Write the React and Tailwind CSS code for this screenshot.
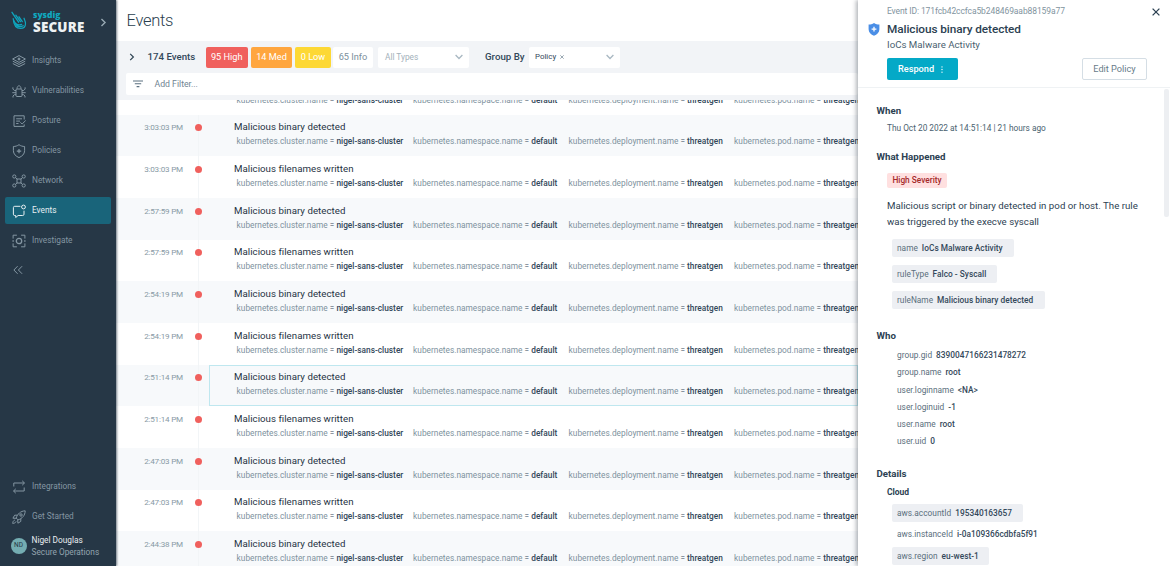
import React from "react";

const navItems = [
  { id: "insights", label: "Insights" },
  { id: "vulnerabilities", label: "Vulnerabilities" },
  { id: "posture", label: "Posture" },
  { id: "policies", label: "Policies" },
  { id: "network", label: "Network" },
  { id: "events", label: "Events", active: true },
  { id: "investigate", label: "Investigate" },
];

const bottomItems = [
  { id: "integrations", label: "Integrations" },
  { id: "rocket", label: "Get Started" },
];

const BINARY = "Malicious binary detected";
const FILENAMES = "Malicious filenames written";

const events = [
  { time: "3:03:03 PM", title: BINARY },
  { time: "3:03:03 PM", title: FILENAMES },
  { time: "2:57:59 PM", title: BINARY },
  { time: "2:57:59 PM", title: FILENAMES },
  { time: "2:54:19 PM", title: BINARY },
  { time: "2:54:19 PM", title: FILENAMES },
  { time: "2:51:14 PM", title: BINARY, selected: true },
  { time: "2:51:14 PM", title: FILENAMES },
  { time: "2:47:03 PM", title: BINARY },
  { time: "2:47:03 PM", title: FILENAMES },
  { time: "2:44:38 PM", title: BINARY },
];

const labels = [
  { name: "kubernetes.cluster.name", value: "nigel-sans-cluster", width: "w-[176.5px]" },
  { name: "kubernetes.namespace.name", value: "default", width: "w-[155.5px]" },
  { name: "kubernetes.deployment.name", value: "threatgen", width: "w-[165.5px]" },
  { name: "kubernetes.pod.name", value: "threatgen", width: "w-[140px]" },
];

const ruleTags = [
  { name: "name", value: "IoCs Malware Activity", width: "w-[122px]" },
  { name: "ruleType", value: "Falco - Syscall", width: "w-[105px]" },
  { name: "ruleName", value: "Malicious binary detected", width: "w-[153px]" },
];

const who = [
  { name: "group.gid", value: "8390047166231478272" },
  { name: "group.name", value: "root" },
  { name: "user.loginname", value: "<NA>" },
  { name: "user.loginuid", value: "-1" },
  { name: "user.name", value: "root" },
  { name: "user.uid", value: "0" },
];

const cloud = [
  { name: "aws.accountId", value: "195340163657", style: "w-[131px] bg-[#edeff3]" },
  { name: "aws.instanceId", value: "i-0a109366cdbfa5f91", style: "w-[170px]" },
  { name: "aws.region", value: "eu-west-1", style: "w-[97px] bg-[#edeff3]" },
];

const icons = {
  insights: (
    <>
      <path d="M7 1.6 13.4 5 7 8.4.6 5Z" />
      <path d="m.8 7.2 6.2 3.2 6.2-3.2M.8 9.5 7 12.7l6.2-3.2" />
      <circle cx="7" cy="5" r="1" fill="currentColor" />
    </>
  ),
  vulnerabilities: (
    <>
      <rect x="4" y="5" width="6" height="7.5" rx="1" />
      <path d="M5 4.8C5 .8 9 .8 9 4.8M4 6.5H2.3L.9 5V3.3M10 6.5h1.7L13.1 5V3.3M4 8.7H.3M10 8.7h3.7M4 10.7H2.3L1 12v1.5M10 10.7h1.7L13 12v1.5" />
    </>
  ),
  posture: (
    <>
      <path d="M12.2 5.5V1.8H2v10.6h10.2v-2" />
      <path d="M4.2 4.8H10M4.2 7.1H8M4.2 9.5h2.3M8.4 8.3l1.7 1.7 3.6-3.5" />
    </>
  ),
  policies: (
    <>
      <path d="M7 .7c1.8 1.3 3.6 1.7 5.6 1.8v4.2c0 3.4-2.5 5.6-5.6 6.9-3.1-1.3-5.6-3.5-5.6-6.9V2.5C3.4 2.4 5.2 2 7 .7Z" />
      <path d="M7 4.9v4.4M4.8 7.1h4.4" strokeWidth="1.2" />
    </>
  ),
  network: (
    <>
      <rect x="5" y="5" width="4" height="4" />
      <circle cx="2.3" cy="2.5" r="1.6" />
      <circle cx="11.7" cy="2.5" r="1.6" />
      <circle cx="2.3" cy="11.5" r="1.6" />
      <circle cx="11.7" cy="11.5" r="1.6" />
      <path d="M3.5 3.6 5.2 5.2M10.5 3.6 8.8 5.2M3.5 10.4l1.7-1.6M10.5 10.4 8.8 8.8" />
    </>
  ),
  events: (
    <>
      <path d="M8.4 2.3H2.7q-1.3 0-1.3 1.3v6.6q0 1.3 1.3 1.3h1v2l2.4-2h4.6q1.3 0 1.3-1.3V6.7" />
      <circle cx="11.5" cy="3" r="1.9" />
    </>
  ),
  investigate: (
    <>
      <path d="M1.1 4.6V1.2h3.8M9.1 1.2h3.8v3.4M12.9 9.4v3.4H9.1M4.9 12.8H1.1V9.4M1.1 6v2M12.9 6v2" />
      <circle cx="7" cy="7" r="2.7" strokeWidth="1.3" />
    </>
  ),
  integrations: <path d="M1.8 6.5V3h10.5M10.2.8l2.3 2.2-2.3 2.2M12.2 7.5V11H1.7M3.8 8.8 1.5 11l2.3 2.2" />,
  rocket: (
    <>
      <path d="M4.2 8C5.5 4 8.5 1 13.2.8c-.1 4.7-3 7.8-7.2 9.1Z" />
      <path d="M5.3 5.2H2.7L.9 8.2l3.2.1M8.8 8.9v2.5l-2.9 1.8-.2-3.2M2.8 10C1.4 10.6.8 11.7.7 13.4c1.7-.1 2.9-.7 3.5-2" />
      <circle cx="9" cy="5" r="1.2" />
    </>
  ),
};

function NavIcon({ id }) {
  return (
    <svg viewBox="0 0 14 14" className="-ml-[1px] size-[14px] shrink-0 overflow-visible" fill="none" stroke="currentColor" strokeWidth="1">
      {icons[id]}
    </svg>
  );
}

function NavItem({ id, label, active }) {
  return (
    <div
      className={`flex h-[27px] items-center gap-[6.5px] rounded-[2px] pl-[7.5px] ${
        active ? "bg-[#19647a] text-[#e6eff2]" : "text-[#8496a2]"
      }`}
    >
      <NavIcon id={id} />
      <span className="text-[8.3px]">{label}</span>
    </div>
  );
}

function Chevron({ className }) {
  return (
    <svg viewBox="0 0 8 8" className={className} fill="none" stroke="currentColor" strokeWidth="1.2">
      <path d="m2.2.8 3.2 3.2-3.2 3.2" />
    </svg>
  );
}

function Sidebar() {
  return (
    <aside className="z-10 flex w-[116px] shrink-0 flex-col bg-[#263746] px-[5px] shadow-[1px_0_2px_rgba(30,45,60,0.6)]">
      <div className="flex h-[46px] items-center pl-[6px]">
        <svg viewBox="0 0 16 20" className="-mt-[4px] h-5 w-4 shrink-0" fill="none" stroke="#0fa5bd" strokeLinecap="round">
          <path d="M1 1.3 7.6 11.2" strokeWidth="1.3" />
          <path d="M2.2 7.6C2.6 13 5 17.4 9.5 17.4c3.2 0 5-2.3 5-5 0-2-.9-3.4-1.5-5.2" strokeWidth="1.2" />
          <path d="M4.8 4.2 9.4 10.6M8 5.8l3.3 4.8M2.6 9.2c1.8 3.8 4.6 5.6 8 4.2M3.8 11.8c2 3.4 5 4.8 8.4 3" strokeWidth="1.3" />
        </svg>
        <div className="-mt-[2px] ml-[6px] w-[54px] font-['Open_Sans']">
          <div className="text-[8.5px] leading-[9px] font-extrabold text-[#10a7bf]">sysdig</div>
          <div className="mt-[2px] text-[13.4px] leading-[13px] font-extrabold tracking-[0.2px] text-[#eef2f4]">SECURE</div>
        </div>
        <Chevron className="-mt-[2px] ml-[12px] size-[9px] text-[#9aabb5]" />
      </div>
      <nav className="flex flex-col gap-[3px] pt-[1px]">
        {navItems.map((item) => (
          <NavItem key={item.id} {...item} />
        ))}
      </nav>
      <svg viewBox="0 0 10 10" className="mt-[11px] ml-[8px] size-[10px] text-[#8698a4]" fill="none" stroke="currentColor">
        <path d="M4.6 1.2.9 5l3.7 3.8M9.1 1.2 5.4 5l3.7 3.8" />
      </svg>
      <nav className="mt-auto flex flex-col gap-[3px]">
        {bottomItems.map((item) => (
          <NavItem key={item.id} {...item} />
        ))}
      </nav>
      <div className="mb-[5px] flex h-[31px] items-center gap-[5px] pl-[5.5px]">
        <span className="flex size-[16px] shrink-0 items-center justify-center rounded-full bg-[#74adb2] text-[6.5px] text-[#263746]">
          ND
        </span>
        <div className="text-[8.3px] leading-[12px] whitespace-nowrap">
          <div className="text-[#e8edf0]">Nigel Douglas</div>
          <div className="text-[#93a4ae]">Secure Operations</div>
        </div>
      </div>
    </aside>
  );
}

function DropArrow() {
  return (
    <svg viewBox="0 0 8 6" className="ml-auto h-[6px] w-[8px] text-[#a9b8c2]" fill="none" stroke="currentColor" strokeWidth="1.3">
      <path d="m.6 1 3.4 3.5L7.4 1" />
    </svg>
  );
}

function Toolbar() {
  return (
    <div className="h-[59px] shrink-0 bg-[#f2f4f7] pt-[6px] pl-[10px]">
      <div className="flex h-[20.5px] items-center text-[9.2px]">
        <Chevron className="ml-[2px] size-[8px] text-[#2f4454]" />
        <span className="ml-[11.5px] w-[58px] text-[9.7px] font-medium whitespace-nowrap text-[#33485a]">174 Events</span>
        <span className="flex h-full w-[42.5px] items-center justify-center rounded-[2px] bg-[#f0605d] text-white">95 High</span>
        <span className="ml-[3px] flex h-full w-[41px] items-center justify-center rounded-[2px] bg-[#ffa63f] text-white">14 Med</span>
        <span className="ml-[3px] flex h-full w-[36px] items-center justify-center rounded-[2px] bg-[#fdd835] text-white">0 Low</span>
        <span className="ml-[2px] flex h-full w-[40px] items-center justify-center rounded-[2px] bg-white text-[#7c8f9c]">65 Info</span>
        <div className="ml-[5px] flex h-full w-[91px] items-center rounded-[2px] bg-white pr-[6px] pl-[7px]">
          <span className="text-[8.3px] text-[#a3b1bb]">All Types</span>
          <DropArrow />
        </div>
        <span className="ml-[16px] w-[44px] text-[9.7px] font-medium whitespace-nowrap text-[#33485a]">Group By</span>
        <div className="flex h-full w-[91px] items-center rounded-[2px] bg-white pr-[6px] pl-[6px]">
          <span className="text-[7.9px] text-[#33485a]">Policy</span>
          <svg viewBox="0 0 4 4" className="ml-[4px] size-[4px] text-[#8193a0]" fill="none" stroke="currentColor" strokeWidth="0.8">
            <path d="m.3.3 3.4 3.4M3.7.3.3 3.7" />
          </svg>
          <DropArrow />
        </div>
      </div>
      <div className="mt-[5px] flex h-[22.5px] items-center rounded-[2px] bg-white pl-[7px]">
        <svg viewBox="0 0 10 8" className="h-[8px] w-[10px] text-[#5b7080]" fill="none" stroke="currentColor" strokeWidth="1.1">
          <path d="M0 1h10M1.8 3.8h6.4M3.6 6.6h2.8" />
        </svg>
        <span className="ml-[11.5px] text-[8.7px] leading-[10px] text-[#6f8492]">Add Filter...</span>
      </div>
    </div>
  );
}

function EventLabels() {
  return (
    <div className="flex text-[8.3px] leading-[14px] whitespace-nowrap text-[#7e929e]">
      {labels.map(({ name, value, width }) => (
        <div key={name} className={`shrink-0 tracking-[0.01px] ${width}`}>
          {name} <span className="text-[#33485a]">=</span> <span className="font-medium text-[#33485a]">{value}</span>
        </div>
      ))}
    </div>
  );
}

function EventRow({ time, title, selected, striped }) {
  return (
    <div className={`flex h-[41.67px] shrink-0 ${striped ? "bg-[#f7f9fb]" : "bg-white"}`}>
      <div className="w-[67px] shrink-0 pt-[6.5px] text-right text-[8.1px] leading-[12px] tracking-[-0.2px] text-[#8799a5]">{time}</div>
      <div className="flex w-[26px] shrink-0 justify-center bg-[linear-gradient(#f2f5f7,#f2f5f7)] bg-[length:1px_100%] bg-[position:15px_0] bg-no-repeat pt-[9.5px] pl-[4.5px]">
        <span className="size-[7px] rounded-full bg-[#f0605d]" />
      </div>
      <div className={`min-w-0 flex-1 border pl-[24px] ${selected ? "border-[#bfe7ef]" : "border-transparent"}`}>
        <div className="pt-[4.7px] text-[9.7px] leading-[14px] tracking-[0.03px] text-[#1f3344]">{title}</div>
        <div className="pl-[2.6px]">
          <EventLabels />
        </div>
      </div>
    </div>
  );
}

function Main() {
  return (
    <main className="flex w-[742px] shrink-0 flex-col overflow-hidden bg-white">
      <h1 className="h-[41px] shrink-0 pl-[10.5px] text-[16.5px] leading-[42px] font-light tracking-[-0.3px] text-[#2a3e4e]">Events</h1>
      <Toolbar />
      <div className="flex min-h-0 flex-1 flex-col overflow-hidden">
        <div className="h-[14.8px] shrink-0 overflow-hidden pl-[120.6px]">
          <div className="-mt-[7px]">
            <EventLabels />
          </div>
        </div>
        {events.map((event, i) => (
          <EventRow key={i} {...event} striped={i % 2 === 0} />
        ))}
      </div>
    </main>
  );
}

function Tag({ name, value, style }) {
  return (
    <div className={`flex h-[18px] items-center gap-[4px] rounded-[2px] pl-[5px] text-[8.3px] tracking-[0.02px] whitespace-nowrap ${style}`}>
      <span className="text-[#5a6e7c]">{name}</span>
      <span className="font-medium text-[#33485a]">{value}</span>
    </div>
  );
}

function SectionTitle({ children }) {
  return <h3 className="h-[14px] text-[9.7px] leading-[14px] font-bold text-[#2c4152]">{children}</h3>;
}

function DetailPanel() {
  return (
    <aside className="z-10 flex w-[312px] shrink-0 flex-col overflow-hidden bg-white shadow-[-2px_0_4px_rgba(40,50,60,0.35)]">
      <header className="flex h-[88px] shrink-0 border-b border-[#eff2f4] pr-[10px] pl-[10px]">
        <svg viewBox="0 0 12 13" className="mt-[23px] h-[13px] w-[12px]">
          <path d="M6 0c1.7 1.1 3.4 1.5 5.4 1.6v4.7c0 3.2-2.3 5.3-5.4 6.5C2.9 11.6.6 9.5.6 6.3V1.6C2.6 1.5 4.3 1.1 6 0Z" fill="#4a8ee6" />
          <path d="M6 3.8v4.8M3.6 6.2h4.8" stroke="white" strokeWidth="1.3" />
        </svg>
        <div className="ml-[7px] flex-1">
          <div className="mt-[5px] text-[8.5px] leading-[13px] tracking-[-0.1px] text-[#8294a0]">Event ID: 171fcb42ccfca5b248469aab88159a77</div>
          <h2 className="mt-[3px] text-[11.8px] leading-[16px] font-medium tracking-[-0.08px] text-[#2c4152]">{BINARY}</h2>
          <div className="mt-[1px] text-[9.7px] leading-[14px] text-[#4a5f6f]">IoCs Malware Activity</div>
          <div className="mt-[6px] flex h-[22px] justify-between">
            <button className="flex w-[71px] items-center rounded-[2px] bg-[#04a9c7] pl-[11px] text-[9.2px] font-medium text-white">
              Respond
              <svg viewBox="0 0 2 8" className="ml-[7px] h-[7px] w-[2px]" fill="currentColor">
                <circle cx="1" cy="1" r=".8" />
                <circle cx="1" cy="4" r=".8" />
                <circle cx="1" cy="7" r=".8" />
              </svg>
            </button>
            <button className="mr-[13px] w-[65px] rounded-[2px] border border-[#d5dee5] text-[9.2px] text-[#677b89]">Edit Policy</button>
          </div>
        </div>
        <svg viewBox="0 0 8 8" className="absolute top-[8px] right-[10px] size-[8px] text-[#2c4152]" fill="none" stroke="currentColor" strokeWidth="1.3">
          <path d="m.6.6 6.8 6.8M7.4.6.6 7.4" />
        </svg>
      </header>
      <div className="flex min-h-0 flex-1">
        <div className="min-w-0 flex-1 overflow-hidden pt-[16px] pl-[18.5px]">
          <SectionTitle>When</SectionTitle>
          <div className="mt-[2.5px] pl-[10.5px] text-[8.3px] leading-[14px] text-[#4a5f6f]">
            Thu Oct 20 2022 at 14:51:14 | 21 hours ago
          </div>
          <div className="mt-[15.5px]">
            <SectionTitle>What Happened</SectionTitle>
          </div>
          <div className="mt-[9px] ml-[10.5px] flex h-[15px] w-[60px] items-center justify-center rounded-[2px] bg-[#ffe0e0] text-[8.3px] font-medium text-[#a52a2a]">
            High Severity
          </div>
          <p className="mt-[10px] ml-[10.5px] text-[9.7px] leading-[16px] tracking-[0.02px] whitespace-nowrap text-[#2c4152]">
            Malicious script or binary detected in pod or host. The rule
            <br />
            was triggered by the execve syscall
          </p>
          <div className="mt-[9px] ml-[15.5px] flex flex-col gap-[8px]">
            {ruleTags.map(({ width, ...tag }) => (
              <Tag key={tag.name} {...tag} style={`${width} bg-[#edeff3]`} />
            ))}
          </div>
          <div className="mt-[20px]">
            <SectionTitle>Who</SectionTitle>
          </div>
          <div className="mt-[3.5px] ml-[15.5px]">
            {who.map((item) => (
              <div key={item.name} className="flex h-[17.3px] items-center">
                <Tag {...item} style="w-full" />
              </div>
            ))}
          </div>
          <div className="mt-[16.5px]">
            <SectionTitle>Details</SectionTitle>
          </div>
          <h4 className="mt-[5px] ml-[10.5px] text-[8.5px] leading-[12px] font-bold text-[#2c4152]">Cloud</h4>
          <div className="mt-[6px] ml-[15.5px] flex flex-col gap-[3.5px]">
            {cloud.map((item) => (
              <Tag key={item.name} {...item} />
            ))}
          </div>
        </div>
        <div className="mt-[1px] mr-[1px] h-[128px] w-[5.5px] rounded-[2px] bg-[#edeff2]" />
      </div>
    </aside>
  );
}

export default function App() {
  return (
    <div className="relative flex h-[566px] w-[1170px] overflow-hidden bg-white font-[Roboto,sans-serif]">
      <Sidebar />
      <Main />
      <DetailPanel />
    </div>
  );
}
